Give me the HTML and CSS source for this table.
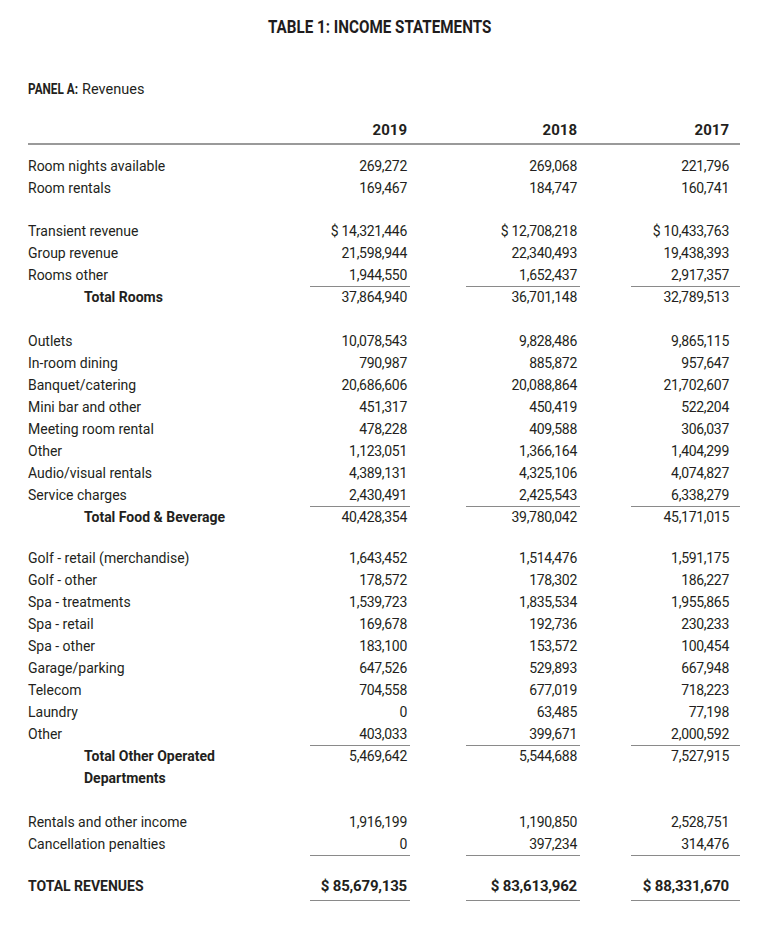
FILE: index.html
```html
<!DOCTYPE html>
<html lang="en">
<head>
<meta charset="utf-8">
<title>Table 1: Income Statements</title>
<link rel="stylesheet" href="styles.css">
</head>
<body>
<div class="page">
  <h1 class="title"><span class="title-text">TABLE 1: INCOME STATEMENTS</span></h1>
  <div class="panel"><span class="panel-tag">PANEL A:</span> Revenues</div>

  <div class="table">
    <div class="row head">
      <div class="label"></div>
      <div class="num c1">2019</div>
      <div class="num c2">2018</div>
      <div class="num c3">2017</div>
    </div>

    <div class="group g1">
      <div class="row"><div class="label">Room nights available</div><div class="num c1">269,272</div><div class="num c2">269,068</div><div class="num c3">221,796</div></div>
      <div class="row"><div class="label">Room rentals</div><div class="num c1">169,467</div><div class="num c2">184,747</div><div class="num c3">160,741</div></div>
    </div>

    <div class="group g2">
      <div class="row"><div class="label">Transient revenue</div><div class="num c1">$ 14,321,446</div><div class="num c2">$ 12,708,218</div><div class="num c3">$ 10,433,763</div></div>
      <div class="row"><div class="label">Group revenue</div><div class="num c1">21,598,944</div><div class="num c2">22,340,493</div><div class="num c3">19,438,393</div></div>
      <div class="row ul"><div class="label">Rooms other</div><div class="num c1">1,944,550</div><div class="num c2">1,652,437</div><div class="num c3">2,917,357</div></div>
      <div class="row total"><div class="label">Total Rooms</div><div class="num c1">37,864,940</div><div class="num c2">36,701,148</div><div class="num c3">32,789,513</div></div>
    </div>

    <div class="group g3">
      <div class="row"><div class="label">Outlets</div><div class="num c1">10,078,543</div><div class="num c2">9,828,486</div><div class="num c3">9,865,115</div></div>
      <div class="row"><div class="label">In-room dining</div><div class="num c1">790,987</div><div class="num c2">885,872</div><div class="num c3">957,647</div></div>
      <div class="row"><div class="label">Banquet/catering</div><div class="num c1">20,686,606</div><div class="num c2">20,088,864</div><div class="num c3">21,702,607</div></div>
      <div class="row"><div class="label">Mini bar and other</div><div class="num c1">451,317</div><div class="num c2">450,419</div><div class="num c3">522,204</div></div>
      <div class="row"><div class="label">Meeting room rental</div><div class="num c1">478,228</div><div class="num c2">409,588</div><div class="num c3">306,037</div></div>
      <div class="row"><div class="label">Other</div><div class="num c1">1,123,051</div><div class="num c2">1,366,164</div><div class="num c3">1,404,299</div></div>
      <div class="row"><div class="label">Audio/visual rentals</div><div class="num c1">4,389,131</div><div class="num c2">4,325,106</div><div class="num c3">4,074,827</div></div>
      <div class="row ul"><div class="label">Service charges</div><div class="num c1">2,430,491</div><div class="num c2">2,425,543</div><div class="num c3">6,338,279</div></div>
      <div class="row total"><div class="label">Total Food &amp; Beverage</div><div class="num c1">40,428,354</div><div class="num c2">39,780,042</div><div class="num c3">45,171,015</div></div>
    </div>

    <div class="group g4">
      <div class="row"><div class="label">Golf - retail (merchandise)</div><div class="num c1">1,643,452</div><div class="num c2">1,514,476</div><div class="num c3">1,591,175</div></div>
      <div class="row"><div class="label">Golf - other</div><div class="num c1">178,572</div><div class="num c2">178,302</div><div class="num c3">186,227</div></div>
      <div class="row"><div class="label">Spa - treatments</div><div class="num c1">1,539,723</div><div class="num c2">1,835,534</div><div class="num c3">1,955,865</div></div>
      <div class="row"><div class="label">Spa - retail</div><div class="num c1">169,678</div><div class="num c2">192,736</div><div class="num c3">230,233</div></div>
      <div class="row"><div class="label">Spa - other</div><div class="num c1">183,100</div><div class="num c2">153,572</div><div class="num c3">100,454</div></div>
      <div class="row"><div class="label">Garage/parking</div><div class="num c1">647,526</div><div class="num c2">529,893</div><div class="num c3">667,948</div></div>
      <div class="row"><div class="label">Telecom</div><div class="num c1">704,558</div><div class="num c2">677,019</div><div class="num c3">718,223</div></div>
      <div class="row"><div class="label">Laundry</div><div class="num c1">0</div><div class="num c2">63,485</div><div class="num c3">77,198</div></div>
      <div class="row ul"><div class="label">Other</div><div class="num c1">403,033</div><div class="num c2">399,671</div><div class="num c3">2,000,592</div></div>
      <div class="row total"><div class="label">Total Other Operated</div><div class="num c1">5,469,642</div><div class="num c2">5,544,688</div><div class="num c3">7,527,915</div></div>
      <div class="row total"><div class="label">Departments</div><div class="num c1"></div><div class="num c2"></div><div class="num c3"></div></div>
    </div>

    <div class="group g5">
      <div class="row"><div class="label">Rentals and other income</div><div class="num c1">1,916,199</div><div class="num c2">1,190,850</div><div class="num c3">2,528,751</div></div>
      <div class="row ul"><div class="label">Cancellation penalties</div><div class="num c1">0</div><div class="num c2">397,234</div><div class="num c3">314,476</div></div>
    </div>

    <div class="row grand">
      <div class="label">TOTAL REVENUES</div>
      <div class="num c1">$ 85,679,135</div>
      <div class="num c2">$ 83,613,962</div>
      <div class="num c3">$ 88,331,670</div>
    </div>
  </div>
</div>
</body>
</html>
```

FILE: styles.css
```css
html, body {
  margin: 0;
  padding: 0;
  background: #ffffff;
}

body {
  font-family: "Roboto", "Liberation Sans", Arial, sans-serif;
  color: #231f20;
  font-size: 14px;
}

.page {
  width: 712px;
  padding: 16px 28px 20px 28px;
}

.title {
  margin: 0;
  font-family: "Roboto", "Liberation Sans", sans-serif;
  font-weight: 700;
  font-size: 19px;
  line-height: 22px;
  text-align: center;
  padding-right: 8px;
  color: #1f1c1d;
}

.title-text {
  display: inline-block;
  transform: scaleX(0.8);
  transform-origin: center;
}

.panel {
  margin-top: 41px;
  font-size: 14.5px;
  line-height: 20px;
  color: #231f20;
}

.panel-tag {
  display: inline-block;
  font-weight: 700;
  font-size: 14px;
  transform: scaleX(0.84);
  transform-origin: left center;
  margin-right: -9px;
}

.table {
  margin-top: 19px;
}

.row {
  display: grid;
  grid-template-columns: 282px 100px 170px 160px;
  height: 22px;
}

.label,
.num {
  line-height: 22px;
  white-space: nowrap;
}

.num {
  text-align: right;
  box-sizing: border-box;
  height: 100%;
  letter-spacing: -0.3px;
}

.c1 {
  padding-right: 3px;
}

.c2 {
  margin-left: 56px;
  padding-right: 3px;
}

.c3 {
  margin-left: 51px;
  padding-right: 11px;
}

.head {
  height: 24px;
  border-bottom: 2px solid #9a9a9a;
  box-sizing: content-box;
}

.head .num {
  font-weight: 700;
  font-size: 15px;
  line-height: 22px;
  letter-spacing: 0;
}

.g1 { margin-top: 10px; }
.g2 { margin-top: 21px; }
.g3 { margin-top: 22px; }
.g4 { margin-top: 19px; }
.g5 { margin-top: 22px; }

.ul .num {
  border-bottom: 1.5px solid #8a8a8a;
}

.total .label {
  padding-left: 56px;
  font-weight: 700;
}

.grand {
  margin-top: 20px;
  height: 25.5px;
}

.grand .label {
  font-weight: 700;
}

.grand .num {
  font-weight: 700;
  font-size: 15px;
  letter-spacing: -0.2px;
  border-bottom: 1.5px solid #8a8a8a;
}
```
